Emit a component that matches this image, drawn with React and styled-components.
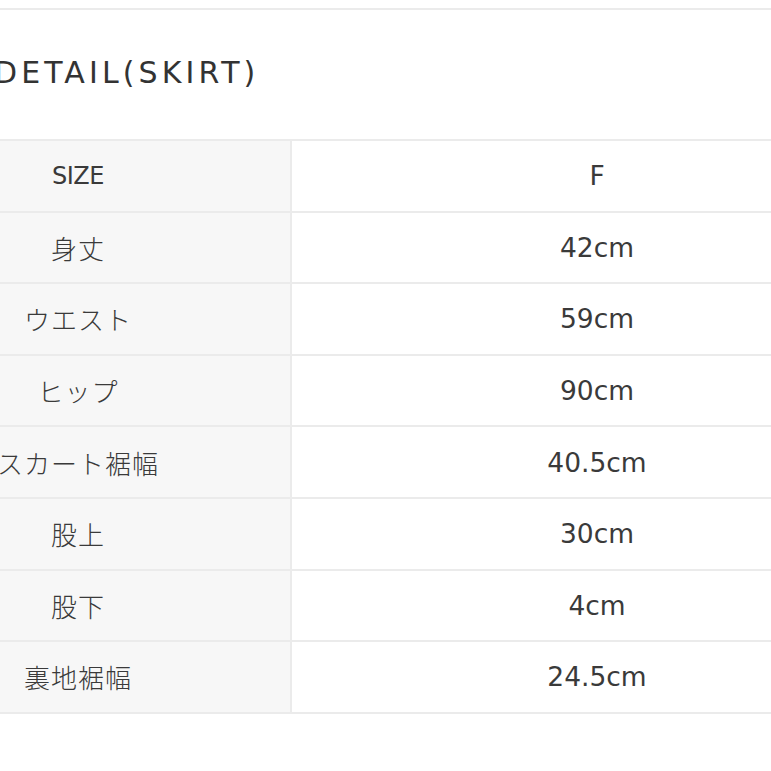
import React from 'react'
import styled, { createGlobalStyle } from 'styled-components'

const GlobalStyle = createGlobalStyle`
  html, body {
    margin: 0;
    padding: 0;
    background: #fff;
    overflow: hidden;
  }
  body {
    font-family: "DejaVu Sans", "Noto Sans CJK JP", sans-serif;
    color: #333;
  }
`

const Page = styled.div`
  width: 771px;
  height: 771px;
  overflow: hidden;
  padding-top: 8px;
  box-sizing: border-box;
`

const TopRule = styled.div`
  height: 2px;
  background: #ebebeb;
`

const Section = styled.section`
  margin-left: -134px;
  width: 1036px;
`

const Heading = styled.h2`
  margin: 0;
  padding: 48px 0 0 128px;
  height: 129px;
  box-sizing: border-box;
  font-family: "DejaVu Sans", sans-serif;
  font-weight: 400;
  font-size: 30px;
  line-height: 30px;
  letter-spacing: 4.1px;
  color: #333;
`

const Table = styled.div`
  display: grid;
  grid-template-columns: 426px 1fr;
  border-top: 2px solid #ebebeb;
`

const Label = styled.div`
  height: 69.6px;
  display: flex;
  align-items: center;
  justify-content: center;
  background: #f7f7f7;
  border-bottom: 2px solid #ebebeb;
  border-right: 2px solid #ebebeb;
  font-family: ${p => (p.$latin ? '"DejaVu Sans", sans-serif' : '"Noto Sans CJK JP", sans-serif')};
  font-size: ${p => (p.$latin ? '24px' : '26px')};
  font-weight: ${p => (p.$latin ? 400 : 300)};
  letter-spacing: ${p => (p.$latin ? '-0.5px' : '1px')};
  color: #3a3a3a;
`

const Value = styled.div`
  height: 69.6px;
  display: flex;
  align-items: center;
  justify-content: center;
  background: #fff;
  border-bottom: 2px solid #ebebeb;
  font-size: 26.5px;
  font-weight: 400;
  color: #3a3a3a;
`

const rows = [
  ['SIZE', 'F', true],
  ['身丈', '42cm'],
  ['ウエスト', '59cm'],
  ['ヒップ', '90cm'],
  ['スカート裾幅', '40.5cm'],
  ['股上', '30cm'],
  ['股下', '4cm'],
  ['裏地裾幅', '24.5cm'],
]

export default function App() {
  return (
    <>
      <GlobalStyle />
      <Page>
        <TopRule />
        <Section>
          <Heading>DETAIL(SKIRT)</Heading>
          <Table>
            {rows.map(([label, value, latin]) => (
              <React.Fragment key={label}>
                <Label $latin={latin}>{label}</Label>
                <Value>{value}</Value>
              </React.Fragment>
            ))}
          </Table>
        </Section>
      </Page>
    </>
  )
}
